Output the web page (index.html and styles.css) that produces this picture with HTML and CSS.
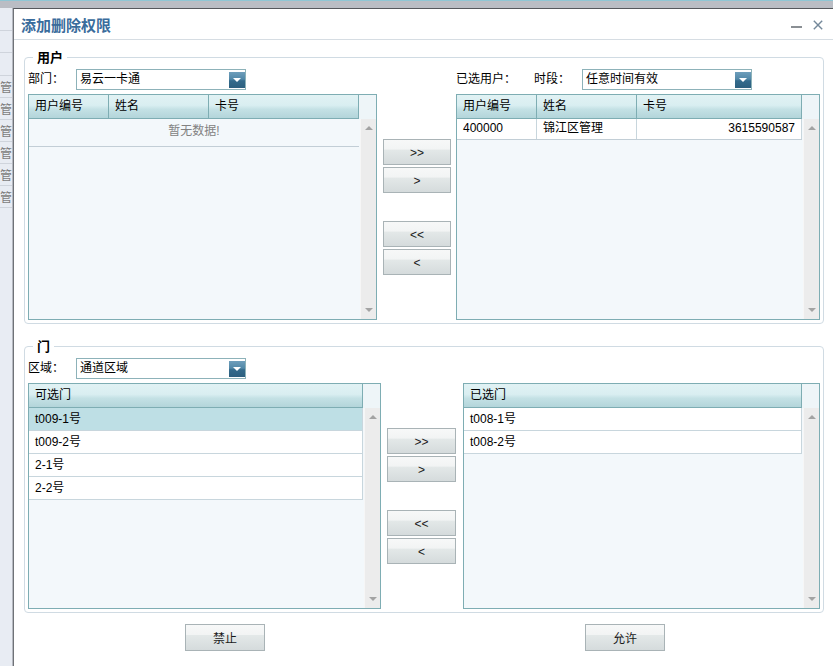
FILE: index.html
```html
<!DOCTYPE html>
<html lang="zh-CN">
<head>
<meta charset="utf-8">
<title>添加删除权限</title>
<link rel="stylesheet" href="styles.css">
</head>
<body>
<div class="topbar"></div>
<div class="desk">
  <div class="page-edge">
    <div class="edge-row edge-a"></div>
    <div class="edge-row"></div>
    <div class="edge-row edge-a"></div>
    <div class="edge-row">管</div>
    <div class="edge-row">管</div>
    <div class="edge-row">管</div>
    <div class="edge-row">管</div>
    <div class="edge-row">管</div>
    <div class="edge-row">管</div>
  </div>
  <div class="dialog">
    <div class="titlebar">
      <span class="title">添加删除权限</span>
      <div class="win-ctrls">
        <svg class="ic-min" width="11" height="10" viewBox="0 0 11 10"><rect x="0" y="6" width="11" height="2" fill="#8a8f94"/></svg>
        <svg class="ic-close" width="10" height="10" viewBox="0 0 10 10"><path d="M0.8 0.8L9.2 9.2M9.2 0.8L0.8 9.2" stroke="#74889a" stroke-width="1.4" fill="none"/></svg>
      </div>
    </div>
    <div class="content">
      <div class="group">
        <div class="legend">用户</div>
        <div class="toolbar">
          <div class="tb-left">
            <span class="lbl">部门：</span>
            <div class="select"><span class="sel-text">易云一卡通</span><span class="sel-btn"></span></div>
          </div>
          <div class="tb-right">
            <span class="lbl lbl-wide">已选用户：</span>
            <span class="lbl">时段：</span>
            <div class="select"><span class="sel-text">任意时间有效</span><span class="sel-btn"></span></div>
          </div>
        </div>
        <div class="transfer">
          <div class="grid grid-left">
            <div class="grid-main">
              <div class="grid-head">
                <div class="hc c1">用户编号</div><div class="hc c2">姓名</div><div class="hc c3">卡号</div>
              </div>
              <div class="empty-row">暂无数据!</div>
            </div>
            <div class="grid-side"><div class="side-cap"></div><div class="scroll"><i class="arr-up"></i><i class="arr-down"></i></div></div>
          </div>
          <div class="movers">
            <button class="btn mv">&gt;&gt;</button>
            <button class="btn mv">&gt;</button>
            <button class="btn mv mv-gap">&lt;&lt;</button>
            <button class="btn mv">&lt;</button>
          </div>
          <div class="grid grid-right">
            <div class="grid-main">
              <div class="grid-head">
                <div class="hc c1">用户编号</div><div class="hc c2">姓名</div><div class="hc c3">卡号</div>
              </div>
              <div class="drow">
                <div class="dc c1">400000</div><div class="dc c2">锦江区管理</div><div class="dc c3 num">3615590587</div>
              </div>
            </div>
            <div class="grid-side"><div class="side-cap"></div><div class="scroll"><i class="arr-up"></i><i class="arr-down"></i></div></div>
          </div>
        </div>
      </div>

      <div class="group group-doors">
        <div class="legend">门</div>
        <div class="toolbar">
          <div class="tb-left">
            <span class="lbl">区域：</span>
            <div class="select"><span class="sel-text">通道区域</span><span class="sel-btn"></span></div>
          </div>
        </div>
        <div class="transfer">
          <div class="grid list-left">
            <div class="grid-main">
              <div class="grid-head"><div class="hc c3">可选门</div></div>
              <div class="lrow sel">t009-1号</div>
              <div class="lrow">t009-2号</div>
              <div class="lrow">2-1号</div>
              <div class="lrow">2-2号</div>
            </div>
            <div class="grid-side"><div class="side-cap"></div><div class="scroll"><i class="arr-up"></i><i class="arr-down"></i></div></div>
          </div>
          <div class="movers movers-doors">
            <button class="btn mv">&gt;&gt;</button>
            <button class="btn mv">&gt;</button>
            <button class="btn mv mv-gap">&lt;&lt;</button>
            <button class="btn mv">&lt;</button>
          </div>
          <div class="grid list-right">
            <div class="grid-main">
              <div class="grid-head"><div class="hc c3">已选门</div></div>
              <div class="lrow">t008-1号</div>
              <div class="lrow">t008-2号</div>
            </div>
            <div class="grid-side"><div class="side-cap"></div><div class="scroll"><i class="arr-up"></i><i class="arr-down"></i></div></div>
          </div>
        </div>
      </div>

      <div class="footer">
        <button class="btn btn-lg">禁止</button>
        <button class="btn btn-lg">允许</button>
      </div>
    </div>
  </div>
</div>
</body>
</html>
```
FILE: styles.css
```css
html, body {
  margin: 0;
  height: 100%;
}
body {
  background: #babdc4;
  font: 12px "Liberation Sans", "Noto Sans CJK SC", sans-serif;
  color: #000;
  display: flex;
  flex-direction: column;
  overflow: hidden;
}
.topbar {
  flex: none;
  height: 7px;
  border-top: 1px solid #8fc6d4;
  background: #babdc4;
}
.desk {
  flex: 1;
  display: flex;
  min-height: 0;
}
.page-edge {
  flex: none;
  width: 12px;
  background: #e8ecf3;
  border-right: 1px solid #b6b9c1;
  overflow: hidden;
}
.edge-row {
  height: 21px;
  border-bottom: 1px solid #cfd4dc;
  line-height: 21px;
  white-space: nowrap;
  color: #7c7c7c;
  font: 12px/21px "Noto Sans CJK SC", sans-serif;
}
.edge-a {
  height: 22px;
}
.dialog {
  flex: 1;
  min-width: 0;
  background: #fff;
  border-left: 1px solid #6f7277;
  border-top: 1px solid #55585d;
  display: flex;
  flex-direction: column;
}
.titlebar {
  flex: none;
  height: 30px;
  border-bottom: 1px solid #d6dde3;
  display: flex;
  align-items: center;
  padding: 0 10px 0 7px;
}
.title {
  font: bold 15px "Noto Sans CJK SC", sans-serif;
  color: #3a6c9c;
}
.win-ctrls {
  margin-left: auto;
  display: flex;
  align-items: center;
  gap: 11px;
  margin-top: 2px;
}
.ic-min, .ic-close {
  display: block;
}
.content {
  padding-top: 17px;
}
.group {
  margin: 0 9px 0 10px;
  border: 1px solid #d0dbe3;
  border-radius: 4px;
  padding: 0 3px 3px 3px;
}
.group-doors {
  margin-top: 22px;
}
.legend {
  width: max-content;
  margin: -9px 0 0 5px;
  padding: 0 4px;
  background: #fff;
  font: bold 13px/16px "Noto Sans CJK SC", sans-serif;
}
.toolbar {
  display: flex;
  margin-top: 4px;
  height: 21px;
}
.tb-left {
  width: 428px;
  display: flex;
}
.tb-right {
  display: flex;
}
.lbl {
  flex: none;
  width: 48px;
  line-height: 21px;
  white-space: nowrap;
}
.lbl-wide {
  width: 78px;
}
.select {
  flex: none;
  width: 170px;
  height: 21px;
  box-sizing: border-box;
  border: 1px solid #8db2b9;
  background: #fff;
  display: flex;
  padding-left: 3px;
}
.sel-text {
  flex: 1;
  line-height: 19px;
  white-space: nowrap;
}
.sel-btn {
  flex: none;
  width: 16px;
  height: 16px;
  margin-top: 2px;
  background: linear-gradient(#6e9ebb 0%, #5288a8 45%, #336a8b 55%, #2c5f7f 100%);
  display: flex;
  align-items: center;
  justify-content: center;
}
.sel-btn::after {
  content: "";
  width: 0;
  height: 0;
  border-left: 4px solid transparent;
  border-right: 4px solid transparent;
  border-top: 4px solid #fff;
}
.transfer {
  display: flex;
  margin-top: 4px;
}
.grid {
  flex: none;
  height: 226px;
  box-sizing: border-box;
  border: 1px solid #7eadb3;
  background: #f3f8fb;
  display: flex;
}
.grid-left { width: 349px; }
.grid-right { width: 364px; }
.list-left { width: 353px; }
.list-right { flex: 1; }
.grid-main {
  flex: 1;
  min-width: 0;
  display: flex;
  flex-direction: column;
}
.grid-head {
  flex: none;
  display: flex;
  height: 24px;
  box-sizing: border-box;
  border-bottom: 1px solid #7eadb3;
  background: linear-gradient(#e1f2f4 0%, #d9eef1 45%, #c4e1e5 62%, #b3d5da 100%);
}
.hc {
  box-sizing: border-box;
  border-right: 1px solid #7eadb3;
  padding-left: 6px;
  line-height: 23px;
  white-space: nowrap;
}
.c1 { width: 80px; flex: none; }
.c2 { width: 100px; flex: none; }
.c3 { flex: 1; }
.grid-side {
  flex: none;
  width: 17px;
  display: flex;
  flex-direction: column;
}
.side-cap {
  flex: none;
  height: 24px;
  background: #eef5f8;
}
.scroll {
  flex: 1;
  margin-left: 1px;
  background: #ececec;
  border-left: 1px solid #f6f6f6;
  display: flex;
  flex-direction: column;
  justify-content: space-between;
  align-items: center;
  padding: 7px 0;
}
.arr-up {
  width: 0;
  height: 0;
  border-left: 4px solid transparent;
  border-right: 4px solid transparent;
  border-bottom: 4px solid #a3a3a3;
}
.arr-down {
  width: 0;
  height: 0;
  border-left: 4px solid transparent;
  border-right: 4px solid transparent;
  border-top: 4px solid #a3a3a3;
}
.empty-row {
  height: 28px;
  box-sizing: border-box;
  border-bottom: 1px solid #c2ced6;
  line-height: 24px;
  text-align: center;
  color: #828282;
}
.drow {
  display: flex;
  height: 21px;
  box-sizing: border-box;
  border-bottom: 1px solid #c2ced6;
  background: #fff;
}
.dc {
  box-sizing: border-box;
  border-right: 1px solid #c8d6dd;
  padding-left: 6px;
  line-height: 19px;
  white-space: nowrap;
}
.dc.num {
  text-align: right;
  padding-right: 6px;
}
.lrow {
  flex: none;
  height: 23px;
  box-sizing: border-box;
  border-bottom: 1px solid #c8d6dd;
  border-right: 1px solid #c8d6dd;
  background: #fff;
  padding-left: 6px;
  line-height: 22px;
  white-space: nowrap;
}
.lrow.sel {
  background: #bedfe5;
}
.movers {
  flex: none;
  width: 68px;
  margin: 0 5px 0 6px;
  padding-top: 45px;
}
.movers-doors {
  width: 69px;
  margin: 0 7px 0 6px;
}
.btn {
  display: block;
  box-sizing: border-box;
  border: 1px solid #a9b3b6;
  background: linear-gradient(#f7f8f8 0%, #f2f4f4 38%, #e3e8e8 42%, #d5dbdc 100%);
  font: 12px "Liberation Sans", "Noto Sans CJK SC", sans-serif;
  color: #1a1a1a;
  padding: 0;
  margin: 0;
}
.mv {
  width: 100%;
  height: 26px;
  padding-top: 2px;
}
.mv + .mv {
  margin-top: 2px;
}
.mv.mv-gap {
  margin-top: 28px;
}
.footer {
  display: grid;
  grid-template-columns: 1fr 1fr;
  margin: 11px 8px 0 11px;
}
.btn-lg {
  justify-self: center;
  width: 80px;
  height: 27px;
}
```
